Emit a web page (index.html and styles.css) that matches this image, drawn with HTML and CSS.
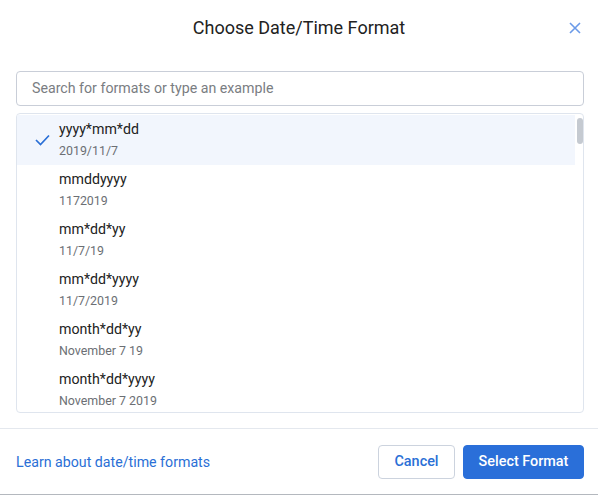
FILE: index.html
```html
<!DOCTYPE html>
<html>
<head>
<meta charset="utf-8">
<link rel="stylesheet" href="styles.css">
</head>
<body>
<div class="dialog">
  <div class="header">
    <h1 class="title">Choose Date/Time Format</h1>
    <button class="close" aria-label="Close">
      <svg width="12" height="12" viewBox="0 0 12 12"><path d="M1 1L11 11M11 1L1 11" stroke="#6b9ae8" stroke-width="1.6" fill="none"/></svg>
    </button>
  </div>
  <div class="body">
    <div class="search">Search for formats or type an example</div>
    <div class="list">
      <div class="items">
        <div class="item selected">
          <span class="check"><svg width="15" height="12" viewBox="0 0 15 12"><path d="M1 6L5.5 10.5L14 1.5" stroke="#2a6fd6" stroke-width="1.7" fill="none"/></svg></span>
          <div class="texts"><div class="fmt">yyyy*mm*dd</div><div class="ex">2019/11/7</div></div>
        </div>
        <div class="item">
          <span class="check"></span>
          <div class="texts"><div class="fmt">mmddyyyy</div><div class="ex">1172019</div></div>
        </div>
        <div class="item">
          <span class="check"></span>
          <div class="texts"><div class="fmt">mm*dd*yy</div><div class="ex">11/7/19</div></div>
        </div>
        <div class="item">
          <span class="check"></span>
          <div class="texts"><div class="fmt">mm*dd*yyyy</div><div class="ex">11/7/2019</div></div>
        </div>
        <div class="item">
          <span class="check"></span>
          <div class="texts"><div class="fmt">month*dd*yy</div><div class="ex">November 7 19</div></div>
        </div>
        <div class="item">
          <span class="check"></span>
          <div class="texts"><div class="fmt">month*dd*yyyy</div><div class="ex">November 7 2019</div></div>
        </div>
      </div>
      <div class="scrollbar"><div class="thumb"></div></div>
    </div>
  </div>
  <div class="footer">
    <a class="learn" href="#">Learn about date/time formats</a>
    <div class="actions">
      <button class="btn cancel">Cancel</button>
      <button class="btn primary">Select Format</button>
    </div>
  </div>
</div>
</body>
</html>
```
FILE: styles.css
```css
* { box-sizing: border-box; }
html, body { margin: 0; padding: 0; background: #fff; }
body { font-family: Roboto, "Liberation Sans", sans-serif; color: #222; }
.dialog {
  width: 598px;
  height: 495px;
  display: flex;
  flex-direction: column;
  border-bottom: 1px solid #b4b8be;
}
.header {
  height: 56px;
  display: flex;
  align-items: center;
  justify-content: center;
  position: relative;
}
.title {
  margin: 0;
  font-size: 18px;
  font-weight: 400;
  color: #222;
  line-height: 24px;
}
.close {
  position: absolute;
  right: 17px;
  top: 22px;
  width: 12px;
  height: 12px;
  padding: 0;
  border: 0;
  background: none;
  display: flex;
}
.body {
  padding: 15px 14px 0 16px;
  display: flex;
  flex-direction: column;
  gap: 7px;
}
.search {
  height: 35px;
  border: 1px solid #c9ced8;
  border-radius: 4px;
  padding: 0 15px;
  font-size: 14.2px;
  line-height: 33px;
  color: #7a7d82;
}
.list {
  height: 300px;
  border: 1px solid #dfe5ee;
  border-radius: 4px;
  overflow: hidden;
  display: flex;
  padding-top: 1px;
}
.items { flex: 1; }
.item {
  height: 50px;
  display: flex;
  align-items: center;
}
.item.selected { background: #f2f6fd; }
.check {
  width: 42px;
  display: flex;
  justify-content: flex-start;
  padding-left: 18px;
  padding-top: 0;
}
.texts { padding-bottom: 0; margin-top: -1px; }
.fmt { font-size: 14.2px; line-height: 20px; color: #222; }
.ex { font-size: 12.4px; line-height: 20px; color: #6c6f74; margin-top: 2px; }
.scrollbar { width: 8px; padding: 3px 0 0 2px; }
.thumb { width: 6px; height: 26px; border-radius: 3px; background: #c5cad1; }
.footer {
  margin-top: 15px;
  border-top: 1px solid #e4e8ee;
  flex: 1;
  display: flex;
  align-items: center;
  justify-content: space-between;
  padding: 0 14px 0 16px;
}
.learn {
  color: #2a6fd6;
  text-decoration: none;
  font-size: 14.2px;
}
.actions { display: flex; gap: 8px; }
.btn {
  height: 34px;
  border-radius: 4px;
  font-family: Roboto, "Liberation Sans", sans-serif;
  font-size: 14.4px;
  font-weight: 500;
  padding: 0;
  white-space: nowrap;
}
.cancel {
  width: 77px;
  background: #fff;
  border: 1px solid #ccd3de;
  color: #2a6fd6;
}
.primary {
  width: 121px;
  background: #2a6fd9;
  border: 1px solid #2a6fd9;
  color: #fff;
}
```
